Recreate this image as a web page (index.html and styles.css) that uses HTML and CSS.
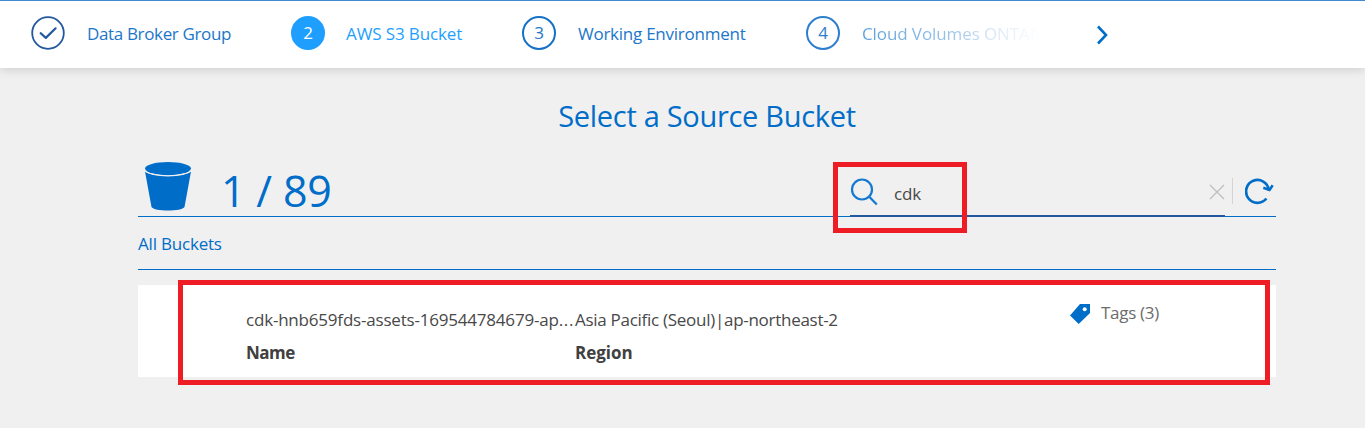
FILE: index.html
```html
<!DOCTYPE html>
<html lang="en">
<head>
<meta charset="utf-8">
<title>Select a Source Bucket</title>
<link rel="stylesheet" href="styles.css">
</head>
<body>
<header class="wizard">
  <div class="step step-group">
    <svg class="badge" viewBox="0 0 34 34"><circle cx="17" cy="17" r="15.8" fill="none" stroke="#2258a0" stroke-width="1.8"/><path d="M9.7 17.2l5.1 4.7 9.8-9.6" fill="none" stroke="#2258a0" stroke-width="2.2" stroke-linecap="round" stroke-linejoin="round"/></svg>
    <span class="label">Data Broker Group</span>
  </div>
  <div class="step step-bucket active">
    <span class="badge number">2</span><span class="label">AWS S3 Bucket</span>
  </div>
  <div class="step step-env">
    <span class="badge number">3</span><span class="label">Working Environment</span>
  </div>
  <div class="step step-volumes">
    <span class="badge number">4</span><span class="label">Cloud Volumes ONTAP</span>
  </div>
  <svg class="next" viewBox="0 0 12 20"><path d="M2 1.5l8 8.5-8 8.5" fill="none" stroke="#006dc9" stroke-width="2.6"/></svg>
</header>
<main class="content">
  <h1 class="title"><span>Select a Source Bucket</span></h1>
  <section class="toolbar">
    <svg class="bucket" viewBox="0 0 46 50"><path d="M0 9.5C5 15.2 41 15.2 46 9.5L39.5 45C37 49.8 9 49.8 6.500 45Z" fill="#006dc9"/><ellipse cx="23" cy="6.600" rx="23" ry="6.600" fill="#006dc9"/><path d="M0 8C4 15.800 42 15.800 46 8" fill="none" stroke="#f0f0f0" stroke-width="1.200"/></svg>
    <span class="count">1 / 89</span>
    <div class="search">
      <svg class="lens" viewBox="0 0 28 28"><circle cx="12" cy="11.500" r="10" fill="none" stroke="#1579cf" stroke-width="2.200"/><path d="M19 18.500l7.800 8" stroke="#1579cf" stroke-width="2.300"/></svg>
      <span class="query">cdk</span>
      <svg class="clear" viewBox="0 0 16 16"><path d="M1 1l14 14M15 1L1 15" stroke="#bdbdbd" stroke-width="1.200"/></svg>
      <div class="highlight highlight-search"></div>
    </div>
    <div class="refresh">
      <svg viewBox="0 0 30 28"><path d="M21.400 20.500A11.400 11.400 0 1 1 23.800 12" fill="none" stroke="#006dc9" stroke-width="2.700"/><path d="M18.300 9.800l6.200 2.200 3.200-4.700" fill="none" stroke="#006dc9" stroke-width="2.500"/></svg>
    </div>
  </section>
  <nav class="crumb"><span>All Buckets</span></nav>
  <article class="card">
    <div class="cell name"><span class="value">cdk-hnb659fds-assets-169544784679-ap<span class="dots">...</span></span><strong>Name</strong></div>
    <div class="cell region"><span class="value">Asia Pacific (Seoul)|ap-northeast-2</span><strong>Region</strong></div>
    <div class="tags">
      <svg viewBox="0 0 20 20"><path d="M10 0H20V9L8.700 20 0 11.500Z" fill="#006dc9"/><circle cx="14.700" cy="5.300" r="2" fill="#fff"/></svg>
      <span>Tags (3)</span>
    </div>
    <div class="highlight highlight-row"></div>
  </article>
</main>
</body>
</html>
```

FILE: styles.css
```css
* { box-sizing: border-box; }
body {
  margin: 0;
  height: 428px;
  overflow: hidden;
  background: #f0f0f0;
  color: #484848;
  font: 400 17px/24px "Open Sans", "Noto Sans", sans-serif;
  white-space: nowrap;
}
svg { display: block; flex: none; }
.wizard {
  display: flex;
  align-items: center;
  height: 68px;
  padding-left: 31px;
  background: #fff;
  border-top: 1px solid #3f8ad0;
  box-shadow: 0 1px 10px rgba(0, 0, 0, .17);
  color: #1c76ca;
}
.step { display: flex; align-items: center; flex: none; gap: 22px; height: 34px; margin-top: -3px; }
.step-group { width: 260px; }
.step-bucket { width: 231px; }
.step-env { width: 284px; }
.step-volumes { width: 290px; }
.badge { width: 34px; height: 34px; flex: none; }
.number { display: flex; align-items: center; justify-content: center; border: 2px solid #1571c8; border-radius: 50%; }
.label { letter-spacing: -.3px; margin-top: 1px; }
.step-group .label { letter-spacing: -.35px; }
.step-env .label { letter-spacing: -.25px; }
.active { color: #1e9fff; gap: 21px; }
.active .label { letter-spacing: -.12px; }
.active .number { background: #1e9fff; border-color: #1e9fff; color: #fff; }
.step-volumes .number { color: #2d7fce; border-color: #2d7fce; }
.step-volumes .label { letter-spacing: -.1px; background: linear-gradient(90deg, #5aa0db 0%, #9bc4e9 50%, #dce9f6 75%, #fff 100%); background-clip: text; -webkit-background-clip: text; color: transparent; }
.next { width: 12px; height: 20px; }
.content { width: 1138px; margin-left: 138px; color: #006dc9; }
.title { margin: 0; padding-top: 28px; height: 87px; font-size: 29px; line-height: 40px; font-weight: 400; letter-spacing: -.3px; text-align: center; }
.toolbar { display: flex; height: 62px; border-bottom: 1px solid #006dc9; padding-left: 7px; }
.bucket { width: 46px; height: 50px; margin-top: 7px; }
.count { font-size: 43px; letter-spacing: -.2px; line-height: 60px; width: 500px; margin: 6px 0 0 30px; }
.search { position: relative; display: flex; width: 375px; height: 63px; flex: none; margin: -1px 0 0 129px; border-bottom: 2px solid #2258a0; color: #484848; }
.lens { width: 28px; height: 28px; margin: 24px 16px 0 0; }
.query { width: 200px; margin-top: 28px; letter-spacing: -.2px; }
.clear { width: 16px; height: 16px; margin: 30px 0 0 115px; }
.refresh { height: 26px; margin: 23px 0 0 7px; border-left: 1px solid #d4d4d4; padding-left: 12px; }
.refresh svg { width: 30px; height: 28px; }
.crumb { height: 53px; padding-top: 15px; border-bottom: 1px solid #006dc9; letter-spacing: -.2px; }
.card { position: relative; display: flex; height: 92px; margin-top: 15px; padding: 23px 0 0 108px; background: #fff; color: #484848; }
.cell { display: flex; flex-direction: column; gap: 9px; width: 329px; }
.cell strong { font-weight: 700; font-size: 17px; color: #404040; }
.name .value { letter-spacing: -.2px; }
.name .dots { letter-spacing: .7px; }
.name strong { letter-spacing: -.5px; }
.region { width: 495px; }
.region .value { letter-spacing: -.28px; }
.tags { display: flex; height: 24px; gap: 11px; margin-top: -7px; color: #6c6c6c; letter-spacing: -.3px; }
.tags svg { width: 20px; height: 20px; margin-top: 3px; }
.highlight { position: absolute; border: 5px solid #ee1c24; }
.highlight-search { left: -17px; top: 8px; width: 134px; height: 71px; }
.highlight-row { left: 40px; top: -5px; width: 1092px; height: 105px; }
```
